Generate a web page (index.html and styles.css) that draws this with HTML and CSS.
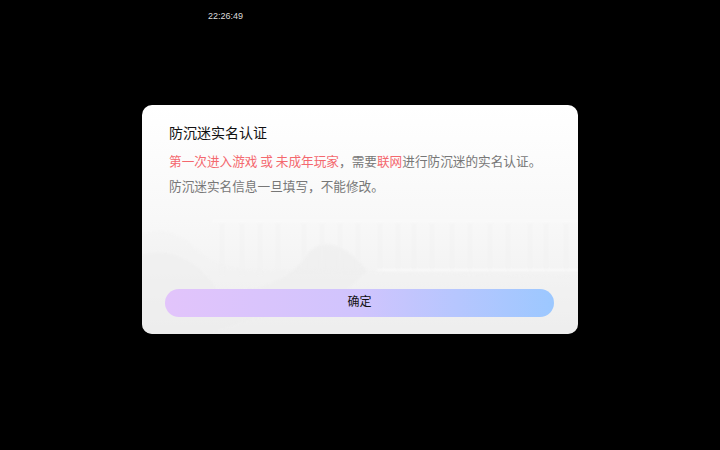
FILE: index.html
```html
<!DOCTYPE html>
<html lang="zh-CN">
<head>
<meta charset="utf-8">
<title>防沉迷实名认证</title>
<link rel="stylesheet" href="styles.css">
</head>
<body>
<div class="clock">22:26:49</div>
<main class="dialog">
  <svg class="scenery" viewBox="0 0 436 229" preserveAspectRatio="none" aria-hidden="true">
    <path class="ground" d="M0 229V130C20 122 40 128 60 150C90 170 120 165 150 166L436 172V229Z"/>
    <path class="bush" d="M0 229V150C30 140 60 160 75 185C110 190 150 175 165 150C180 130 205 140 225 166L200 190C150 205 110 210 70 229Z"/>
    <path class="rail" d="M70 116H436"/>
    <path class="rail-bottom" d="M235 165H436"/>
    <g class="bars">
      <path d="M80 118V170M100 118V170M118 118V170M136 118V165M162 118V165M180 118V165M198 118V165M216 118V165M238 118V165M256 118V165M272 118V165M290 118V165M310 118V165M328 118V165M348 118V165M366 118V165M388 118V165M404 118V165M424 118V165"/>
    </g>
  </svg>
  <h1 class="title">防沉迷实名认证</h1>
  <p class="line"><span class="alert">第一次进入游戏 或 未成年玩家</span>，需要<span class="alert">联网</span>进行防沉迷的实名认证。</p>
  <p class="line">防沉迷实名信息一旦填写，不能修改。</p>
  <button class="confirm" type="button">确定</button>
</main>
</body>
</html>
```
FILE: styles.css
```css
* { box-sizing: border-box; }
html, body { height: 100%; }
body {
  margin: 0;
  position: relative;
  background: #000;
  font-family: "Noto Sans CJK SC", "Liberation Sans", sans-serif;
  display: flex;
  align-items: flex-start;
  justify-content: center;
  padding-top: 105px;
}
.clock {
  position: absolute;
  left: 208px;
  top: 9px;
  color: #dcdcdc;
  font: 9px/14px "Liberation Sans", sans-serif;
}
.dialog {
  position: relative;
  overflow: hidden;
  width: 436px;
  height: 229px;
  padding: 16px 24px 17px 27px;
  display: flex;
  flex-direction: column;
  border-radius: 10px;
  background: linear-gradient(180deg, #ffffff 0%, #f8f8f8 50%, #f4f4f4 70%, #ebebeb 100%);
}
.scenery {
  position: absolute;
  inset: 0;
  width: 100%;
  height: 100%;
  filter: blur(1px);
}
.ground { fill: #f1f1f1; opacity: 0.45; }
.bush { fill: #ececec; opacity: 0.45; }
.rail { stroke: #fbfbfb; stroke-width: 2; fill: none; }
.rail-bottom { stroke: #fcfcfc; stroke-width: 1.5; fill: none; }
.bars path { stroke: #f0f0f0; stroke-width: 4; fill: none; opacity: 0.4; }
.title {
  position: relative;
  margin: 0 0 8px;
  font-size: 14px;
  line-height: 22px;
  font-weight: 400;
  color: #111;
}
.line {
  position: relative;
  margin: 0 0 6px;
  font-size: 12.65px;
  line-height: 19px;
  color: #777;
  white-space: nowrap;
}
.alert { color: #f4686e; }
.confirm {
  position: relative;
  margin: auto 0 0 -4px;
  width: 389px;
  height: 28px;
  flex: none;
  border: 0;
  border-radius: 14px;
  padding: 0 0 5px;
  background: linear-gradient(90deg, #e2c4fb 0%, #d0c4fd 50%, #9cc8ff 100%);
  color: #111;
  font-family: inherit;
  font-size: 12px;
  line-height: 18px;
}
```
